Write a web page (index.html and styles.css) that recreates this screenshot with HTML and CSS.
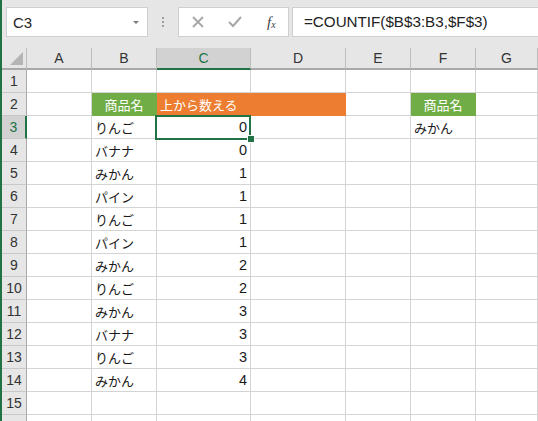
FILE: index.html
```html
<!DOCTYPE html>
<html lang="ja">
<head>
<meta charset="utf-8">
<link rel="stylesheet" href="styles.css">
</head>
<body>
<div class="app">
  <div class="edge"></div>
  <div class="main">
    <div class="toolbar">
      <div class="namebox"><span>C3</span><span class="caret"></span></div>
      <div class="grip"><i></i><i></i><i></i></div>
      <div class="buttons">
        <svg class="ico" width="14" height="14" viewBox="0 0 14 14"><path d="M2 2 L12 12 M12 2 L2 12" stroke="#a6a6a6" stroke-width="1.8" fill="none"/></svg>
        <svg class="ico" width="16" height="14" viewBox="0 0 16 14"><path d="M2 7 L6 11 L14 2" stroke="#a6a6a6" stroke-width="2" fill="none"/></svg>
        <span class="fx">f<sub>x</sub></span>
      </div>
      <div class="formula">=COUNTIF($B$3:B3,$F$3)</div>
    </div>
    <div class="sheet">
      <div class="hd corner"><span class="tri"></span></div>
      <div class="hd col">A</div>
      <div class="hd col">B</div>
      <div class="hd col sel">C</div>
      <div class="hd col">D</div>
      <div class="hd col">E</div>
      <div class="hd col">F</div>
      <div class="hd col">G</div>

      <div class="hd row">1</div><div class="c"></div><div class="c"></div><div class="c"></div><div class="c"></div><div class="c"></div><div class="c"></div><div class="c"></div>

      <div class="hd row">2</div><div class="c"></div><div class="c green center">商品名</div><div class="c orange">上から数える</div><div class="c orange"></div><div class="c"></div><div class="c green center">商品名</div><div class="c"></div>

      <div class="hd row rsel">3</div><div class="c"></div><div class="c">りんご</div><div class="c num active">0<span class="selbox"></span><span class="handle"></span></div><div class="c"></div><div class="c"></div><div class="c">みかん</div><div class="c"></div>

      <div class="hd row">4</div><div class="c"></div><div class="c">バナナ</div><div class="c num">0</div><div class="c"></div><div class="c"></div><div class="c"></div><div class="c"></div>
      <div class="hd row">5</div><div class="c"></div><div class="c">みかん</div><div class="c num">1</div><div class="c"></div><div class="c"></div><div class="c"></div><div class="c"></div>
      <div class="hd row">6</div><div class="c"></div><div class="c">パイン</div><div class="c num">1</div><div class="c"></div><div class="c"></div><div class="c"></div><div class="c"></div>
      <div class="hd row">7</div><div class="c"></div><div class="c">りんご</div><div class="c num">1</div><div class="c"></div><div class="c"></div><div class="c"></div><div class="c"></div>
      <div class="hd row">8</div><div class="c"></div><div class="c">パイン</div><div class="c num">1</div><div class="c"></div><div class="c"></div><div class="c"></div><div class="c"></div>
      <div class="hd row">9</div><div class="c"></div><div class="c">みかん</div><div class="c num">2</div><div class="c"></div><div class="c"></div><div class="c"></div><div class="c"></div>
      <div class="hd row">10</div><div class="c"></div><div class="c">りんご</div><div class="c num">2</div><div class="c"></div><div class="c"></div><div class="c"></div><div class="c"></div>
      <div class="hd row">11</div><div class="c"></div><div class="c">みかん</div><div class="c num">3</div><div class="c"></div><div class="c"></div><div class="c"></div><div class="c"></div>
      <div class="hd row">12</div><div class="c"></div><div class="c">バナナ</div><div class="c num">3</div><div class="c"></div><div class="c"></div><div class="c"></div><div class="c"></div>
      <div class="hd row">13</div><div class="c"></div><div class="c">りんご</div><div class="c num">3</div><div class="c"></div><div class="c"></div><div class="c"></div><div class="c"></div>
      <div class="hd row">14</div><div class="c"></div><div class="c">みかん</div><div class="c num">4</div><div class="c"></div><div class="c"></div><div class="c"></div><div class="c"></div>
      <div class="hd row">15</div><div class="c"></div><div class="c"></div><div class="c"></div><div class="c"></div><div class="c"></div><div class="c"></div><div class="c"></div>
      <div class="hd row"></div><div class="c"></div><div class="c"></div><div class="c"></div><div class="c"></div><div class="c"></div><div class="c"></div><div class="c"></div>
    </div>
  </div>
</div>
</body>
</html>
```

FILE: styles.css
```css
* { box-sizing: border-box; }
html, body {
  margin: 0;
  padding: 0;
  width: 538px;
  height: 421px;
  overflow: hidden;
  background: #fff;
}
body {
  font-family: "Liberation Sans", "Noto Sans CJK JP", sans-serif;
  color: #222;
}
.app {
  display: flex;
  height: 421px;
}
.edge {
  width: 2px;
  flex: none;
  background: #217346;
}
.main {
  flex: 1;
  min-width: 0;
  display: flex;
  flex-direction: column;
}
.toolbar {
  height: 48px;
  flex: none;
  background: #e6e6e6;
  display: flex;
  align-items: flex-start;
  padding-top: 7px;
}
.namebox {
  margin-left: 4px;
  width: 142px;
  height: 30px;
  background: #fff;
  border: 1px solid #cfcfcf;
  display: flex;
  align-items: center;
  justify-content: space-between;
  padding: 0 8px 0 6px;
  font-size: 15px;
  color: #262626;
}
.caret {
  width: 0;
  height: 0;
  border-left: 3px solid transparent;
  border-right: 3px solid transparent;
  border-top: 3px solid #7a7a7a;
}
.grip {
  width: 30px;
  height: 30px;
  display: flex;
  flex-direction: column;
  align-items: center;
  justify-content: center;
  gap: 2px;
}
.grip i {
  display: block;
  width: 2px;
  height: 2px;
  background: #a0a0a0;
}
.buttons {
  width: 111px;
  height: 30px;
  background: #fff;
  border: 1px solid #cfcfcf;
  display: flex;
  align-items: center;
  padding-left: 12px;
  gap: 22px;
}
.fx {
  font-family: "Liberation Serif", serif;
  font-style: italic;
  font-size: 15px;
  color: #444;
  margin-left: 2px;
}
.fx sub {
  font-size: 10px;
  vertical-align: -1px;
}
.formula {
  flex: 1;
  margin-left: 3px;
  height: 30px;
  background: #fff;
  border: 1px solid #cfcfcf;
  border-right: none;
  font-size: 15.2px;
  line-height: 28px;
  padding-left: 11px;
  color: #222;
  white-space: nowrap;
}
.sheet {
  display: grid;
  grid-template-columns: 25px 65px 65px 94px 95px 65px 65px 1fr;
  grid-template-rows: 22px repeat(16, 23px);
}
.hd {
  background: #e6e6e6;
  color: #333;
  font-size: 14px;
  display: flex;
  align-items: center;
  justify-content: center;
  border-right: 1px solid #bdbdbd;
  border-bottom: 1px solid #bdbdbd;
}
.hd.col {
  border-bottom: 2px solid #a9a9a9;
}
.hd.corner {
  border-bottom: 2px solid #a9a9a9;
  position: relative;
}
.tri {
  position: absolute;
  right: 3px;
  bottom: 3px;
  width: 0;
  height: 0;
  border-left: 13px solid transparent;
  border-bottom: 13px solid #b4b4b4;
}
.hd.sel {
  background: #d2d2d2;
  color: #217346;
  border-bottom: 2px solid #217346;
}
.hd.row {
  border-right: 1px solid #a9a9a9;
  border-bottom: 1px solid #c8c8c8;
}
.hd.rsel {
  background: #d2d2d2;
  color: #217346;
  border-right: 2px solid #217346;
}
.c {
  border-right: 1px solid #d4d4d4;
  border-bottom: 1px solid #d4d4d4;
  font-family: "Noto Sans CJK JP", "Liberation Sans", sans-serif;
  font-size: 13px;
  display: flex;
  align-items: center;
  padding: 0 3px;
  white-space: nowrap;
  color: #1a1a1a;
}
.c.num {
  justify-content: flex-end;
  font-family: "Liberation Sans", sans-serif;
  font-size: 14.5px;
  padding-right: 3px;
}
.c.center { justify-content: center; }
.c.green {
  background: #70ad47;
  border-color: #70ad47;
  color: #fff;
}
.c.orange {
  background: #ed7d31;
  border-color: #ed7d31;
  color: #fff;
  overflow: visible;
}
.c.active { position: relative; }
.selbox {
  position: absolute;
  left: -2px;
  top: -1px;
  right: -1px;
  bottom: -2px;
  border: 2px solid #217346;
  pointer-events: none;
}
.handle {
  position: absolute;
  right: -4px;
  bottom: -4px;
  width: 6px;
  height: 6px;
  background: #217346;
  outline: 1px solid #fff;
}
```
